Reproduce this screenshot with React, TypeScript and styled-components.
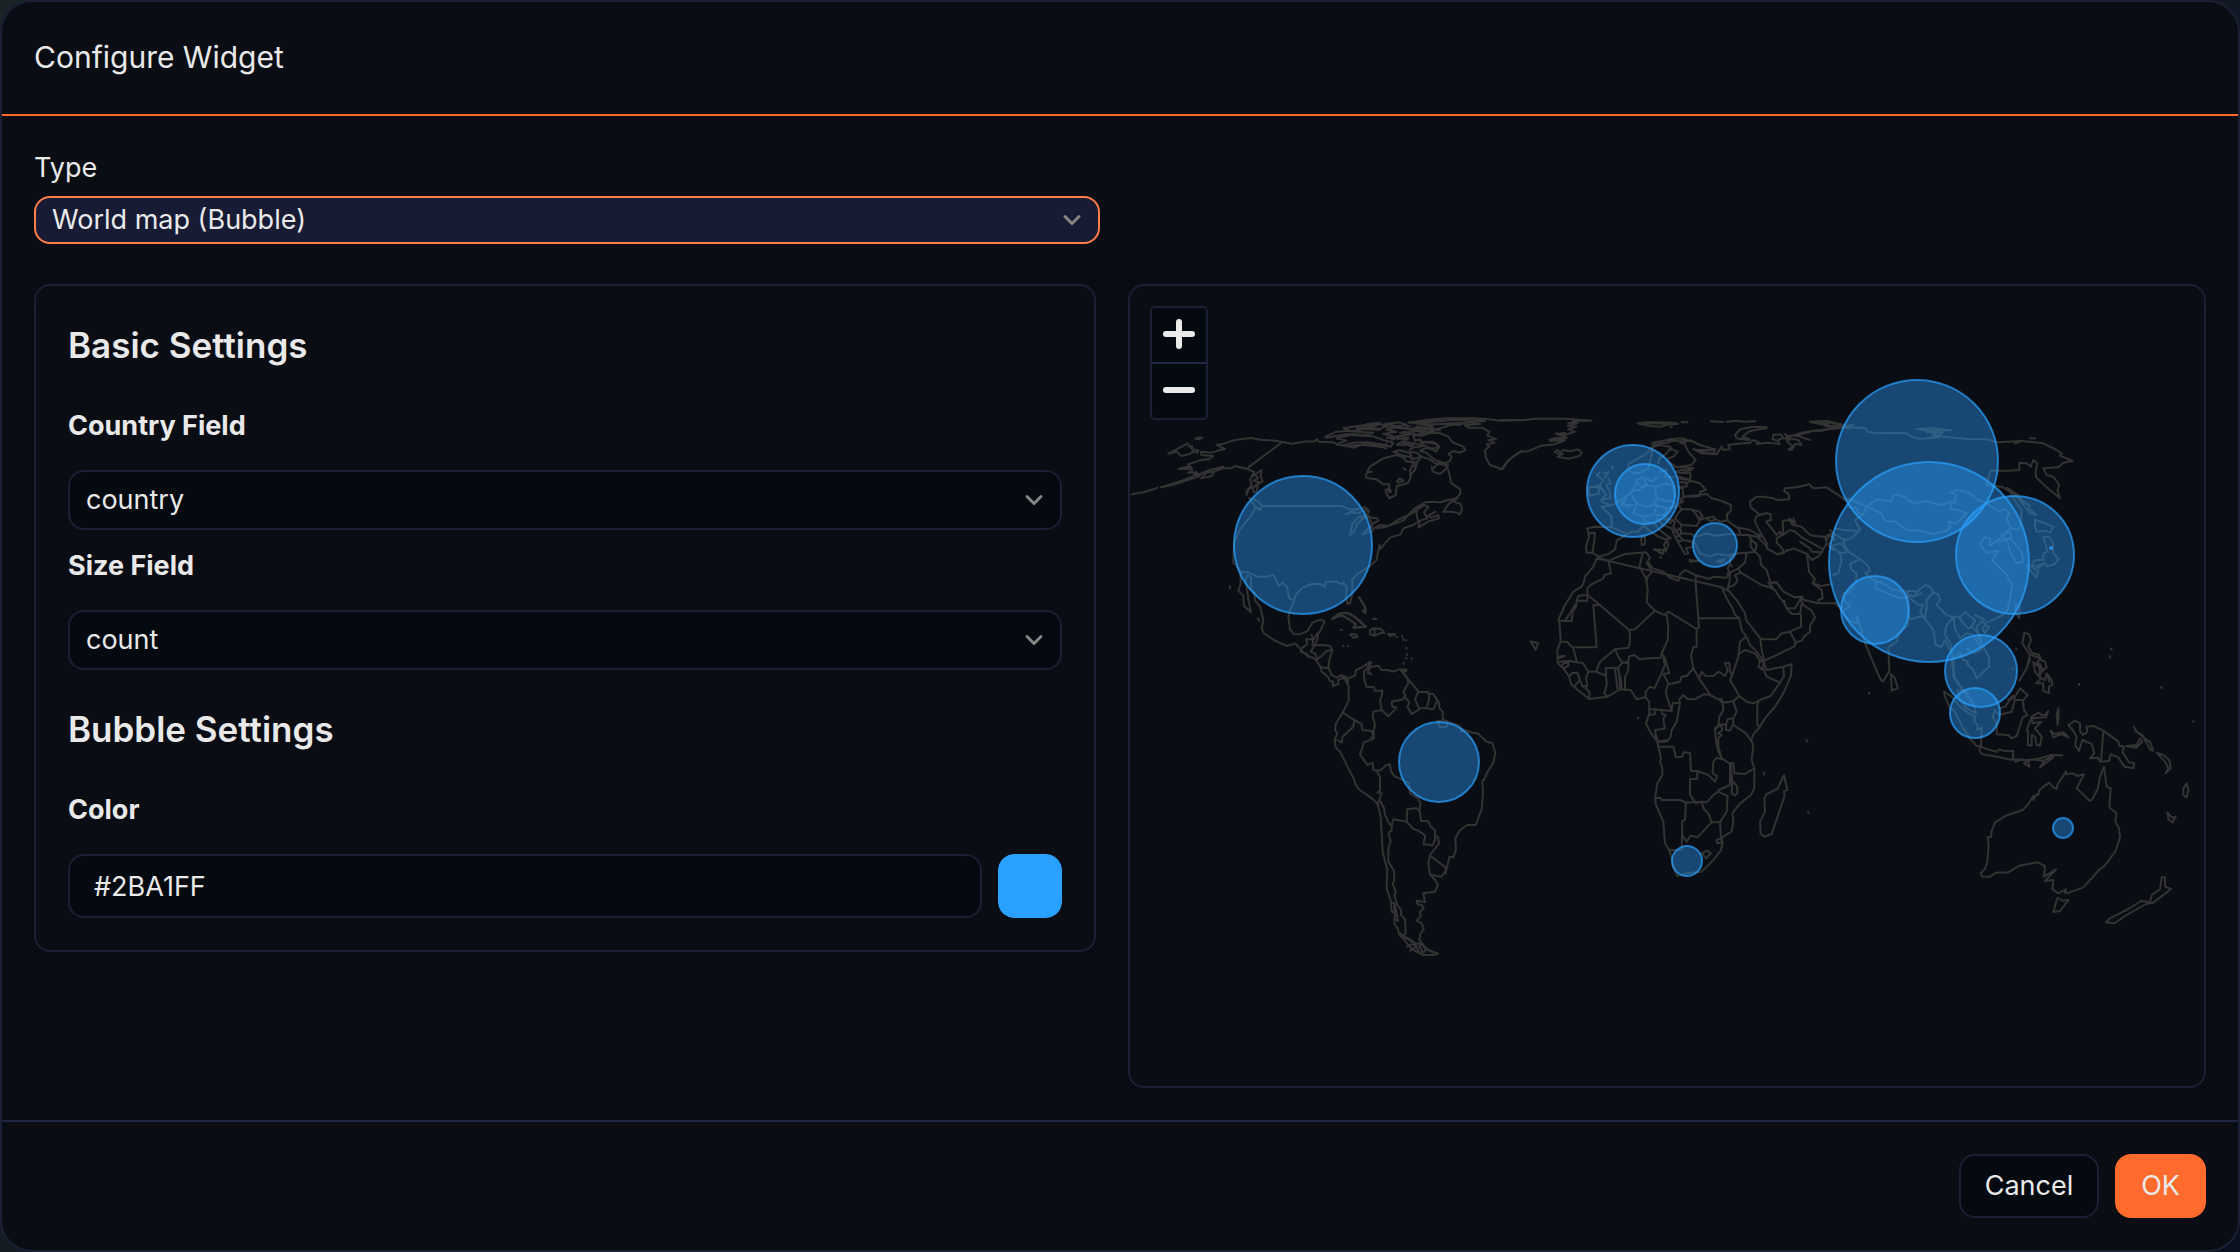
import React, { useId, useState } from "react";
import styled, { createGlobalStyle } from "styled-components";

const color = {
  surface: "#0a0d14",
  field: "#050910",
  line: "#1b2034",
  footerLine: "#1f2645",
  text: "#e9e9e9",
  accent: "#ff6b2c",
  focus: "#ff7d49",
  focusFill: "#171b34",
  icon: "#858585",
  land: "#333333",
};

const GlobalStyle = createGlobalStyle`
  *, *::before, *::after { box-sizing: border-box; }
  body {
    margin: 0;
    color: ${color.text};
    background: linear-gradient(135deg, #1a2326, #0b1020);
    font-family: Inter, "Liberation Sans", sans-serif;
    font-size: 27px;
    line-height: 44px;
  }
  button, input, select { font: inherit; color: inherit; }
`;

const Dialog = styled.main`
  display: flex;
  flex-direction: column;
  min-height: 100vh;
  background: ${color.surface};
  border: 2px solid ${color.line};
  border-radius: 32px;
  overflow: hidden;
`;

const Header = styled.header`
  padding: 32px 32px 34px;
  border-bottom: 2px solid ${color.accent};
`;

const Title = styled.h1`
  margin: 0;
  font-size: 30px;
  line-height: 46px;
  font-weight: 400;
`;

const Body = styled.section`
  flex: 1;
  display: flex;
  flex-direction: column;
  gap: 40px;
  padding: 30px 32px 32px;
`;

const TypeField = styled.div`
  display: flex;
  flex-direction: column;
  gap: 6px;
  width: calc(50% - 20px);
`;

const Columns = styled.div`
  flex: 1;
  display: grid;
  grid-template-columns: minmax(0, 531fr) minmax(0, 539fr);
  gap: 32px;
`;

const Panel = styled.section`
  border: 2px solid ${color.line};
  border-radius: 16px;
  background: ${color.surface};
  box-shadow: 0 4px 12px rgba(0, 0, 0, 0.2);
`;

const Settings = styled(Panel)`
  align-self: start;
  display: flex;
  flex-direction: column;
  gap: 32px;
  padding: 32px;
`;

const Group = styled.div`
  display: flex;
  flex-direction: column;
  gap: 14px;
`;

const GroupTitle = styled.h2`
  margin: 0 0 18px;
  font-size: 35px;
  line-height: 54px;
  font-weight: 600;
`;

const Field = styled.div`
  display: flex;
  flex-direction: column;
  gap: 22px;
`;

const Label = styled.label<{ $strong?: boolean }>`
  font-weight: ${(p) => (p.$strong ? 700 : 400)};
`;

const SelectBox = styled.div`
  position: relative;
`;

const Select = styled.select<{ $active?: boolean }>`
  appearance: none;
  display: block;
  width: 100%;
  height: ${(p) => (p.$active ? 48 : 60)}px;
  padding: 0 56px 0 16px;
  border: 2px solid ${(p) => (p.$active ? color.focus : color.line)};
  border-radius: 16px;
  background: ${(p) => (p.$active ? color.focusFill : color.field)};
  outline: none;
`;

const Arrow = styled.svg`
  position: absolute;
  top: 50%;
  right: 16px;
  width: 24px;
  height: 24px;
  margin-top: -12px;
  fill: none;
  stroke: ${color.icon};
  stroke-width: 3;
  stroke-linecap: round;
  stroke-linejoin: round;
  pointer-events: none;
`;

const ColorRow = styled.div`
  display: flex;
  gap: 16px;
`;

const TextInput = styled.input`
  flex: 1;
  min-width: 0;
  height: 64px;
  padding: 0 24px;
  border: 2px solid ${color.line};
  border-radius: 16px;
  background: ${color.field};
  outline: none;
`;

const Swatch = styled.input`
  appearance: none;
  width: 64px;
  height: 64px;
  padding: 0;
  border: 0;
  border-radius: 16px;
  background: none;
  overflow: hidden;
  cursor: pointer;
  &::-webkit-color-swatch-wrapper { padding: 0; }
  &::-webkit-color-swatch { border: 0; border-radius: 16px; }
`;

const Preview = styled(Panel)`
  position: relative;
  display: flex;
  overflow: hidden;
`;

const MapDrawing = styled.svg`
  flex: 1;
  min-width: 0;
  display: block;
`;

const ZoomBar = styled.div`
  position: absolute;
  top: 20px;
  left: 20px;
  display: flex;
  flex-direction: column;
  border: 2px solid ${color.line};
  border-radius: 5px;
  background: ${color.field};
`;

const ZoomButton = styled.button`
  display: grid;
  place-items: center;
  box-sizing: content-box;
  width: 54px;
  height: 52px;
  padding: 0 0 2px;
  border: 0;
  background: none;
  & + & { border-top: 2px solid #222949; }
  svg {
    width: 36px;
    height: 36px;
    stroke: #ececec;
    stroke-width: 6;
    stroke-linecap: round;
  }
`;

const Footer = styled.footer`
  display: flex;
  justify-content: flex-end;
  gap: 16px;
  padding: 32px;
  border-top: 2px solid ${color.footerLine};
`;

const Button = styled.button<{ $primary?: boolean }>`
  height: 64px;
  padding: 0 24px;
  border: 2px solid ${(p) => (p.$primary ? color.accent : color.line)};
  border-radius: 16px;
  background: ${(p) => (p.$primary ? color.accent : color.field)};
  cursor: pointer;
`;

/* Coastlines and borders, three units to the pixel, each set from its own origin. */
interface Land {
  x: number;
  y: number;
  lines: string[];
}

const lands: Land[] = [
  {
    x: 1120,
    y: 270,
    lines: [
      "M36 673L70 667L100 658L113 653",
      "M123 652L165 643L235 620L243 612L222 613L230 607L205 608L216 602L215 594L203 597L176 596L200 591L213 592L203 583L240 571L268 567L280 558L244 555L243 545L275 548L300 540L315 537L302 531L290 524L305 523L345 510L395 504L420 509L465 512L487 516L515 521L550 515L585 514L590 508L598 515L640 517L655 525L690 527L730 524L780 530L800 522",
      "M487 516L385 592M123 652L185 632L240 612L270 600L310 590L285 605L260 607L243 625L275 618L282 605L312 594L335 595L345 588L385 598L402 606L395 620L425 600L422 618L428 635L414 642L410 665L402 668L395 650L380 662L380 675L386 655L395 645L390 628L404 612L414 625L400 632L418 637L402 652",
      "M145 551L170 538L203 520L208 530L217 528L215 538L235 541L233 548L218 545L210 552L183 558L170 545Z",
      "M226 506L236 502L247 503L238 508Z",
      "M388 685L402 687L420 700L425 710L420 720L405 708Z M425 708L422 720L407 712L395 735L360 778L350 800L342 818L340 880L348 884L362 905",
      "M425 708L665 708L690 718L715 716L735 712L747 722L725 722L718 730L692 728L677 733L700 722L715 718",
      "M735 712L738 738L715 742L697 762L690 795L700 788L712 762L730 745L745 740L752 752L757 765L750 785L727 793L740 780L752 767M745 742L772 745L775 753L757 762M747 722L742 737L757 744",
      "M755 787L762 775L780 765L805 768L833 750L865 735L885 715L915 697L940 695L960 697L985 690L1010 685L1021 670L1021 658L993 638L990 620L984 598L975 585L945 580L930 568L905 560L892 575L885 588L875 590M772 775L800 770L850 752L862 738L880 728L890 720L912 705L925 710L912 727L922 745L900 752L895 772L925 755L957 745L955 735L935 743L925 737L947 725M890 720L890 735L895 755L880 765L850 775L842 793L810 803L795 820L780 838L779 825L772 855L770 870L750 888L715 910L697 928L697 955L695 980L690 1000L682 1002L678 980L680 950L670 937L665 943L650 935L632 935L617 935L615 950L600 942L575 942L545 955L527 975L523 992L510 1020L505 1040L510 1078",
      "M362 905L385 907L412 920L440 920L460 915L470 932L475 948L488 938L500 950L508 985L523 992",
      "M362 905L362 940L355 962L370 977L372 1008L393 1027L385 988L377 925L385 915L393 925L393 955L403 967L405 992L420 1010L430 1050L425 1078",
      "M740 608L750 590L790 565L830 555L850 562L860 575L885 575L870 600L872 622L865 638L845 645L830 648L827 675L808 685L798 668L796 660L808 655L808 643L790 643L770 628L745 625L737 622L740 608L755 605M830 635L840 625L850 632L835 638M870 615L885 600L890 580M806 660h6v6h-6z",
      "M983 592L960 612L938 605L935 590M984 585L960 577L945 590L940 597",
      "M970 725L985 703L1000 692L1010 683L1005 697L1022 702L1026 718L1020 733L1010 728L992 725Z",
      "M880 498L930 484L960 490L985 500L998 517L1030 530L1036 540L1020 548L1000 543L985 552L995 560L990 573L975 580L945 570L918 548L900 543L915 535L945 535L955 528L940 515L905 515L900 508L885 512Z",
      "M900 515L930 518L950 522L958 530L948 545L915 527Z M820 545L840 541L870 550L875 562L850 557L832 550Z M870 545L890 548L905 560L875 568M850 595l8 5M872 575l8 4",
      "M615 500L650 485L690 482L670 475L720 467L760 462L803 465L790 472L775 480L740 476L690 484L725 486L760 488L735 495L680 492L620 503Z",
      "M655 520L680 512L650 505L690 495L760 499L790 510L820 518L812 530L780 522L740 517L700 518L670 526L700 533L740 520L800 535",
      "M740 462L780 458L770 466L735 470L780 477L740 478L710 474L760 470M795 462L840 457L860 465L830 469L805 463L790 470L850 475L870 468",
      "M800 480L830 470L865 478L900 472L890 484L840 488L870 494L825 500L790 492L830 485ZM815 510L840 498L865 505L850 515L880 520L850 526L830 524L860 508L800 503",
      "M865 458L920 450L980 445L1060 445L1100 447L1140 452L1200 450M880 460L950 454L1010 449L1095 453L1050 457L1000 460L950 463L900 463L870 456L940 470L930 482L960 475L990 466L1020 462M890 470L930 475L900 482L870 478L920 490L960 488",
      "M870 490L850 485L905 498L935 486L880 480L910 473L960 480M850 520L875 530L885 520L910 528L882 532L868 540",
      "M1012 466L1045 457L1080 462L1035 466L1045 473L1085 473L1108 485L1102 497L1128 508L1105 510L1123 519L1100 523L1108 530L1095 540L1098 563L1110 585L1145 597L1165 571L1190 552L1204 545",
      "M716 982L735 1010L737 1028L728 1022M637 1045L660 1030L685 1030L705 1042L718 1055L738 1070L700 1073L708 1062L690 1050L665 1036Z M760 1046h8M330 948v6M413 1045l6 8",
    ],
  },
  {
    x: 1300,
    y: 580,
    lines: [
      "M-115 145L-108 160L-75 182L-39 198L-14 190L5 212L25 230L40 233L48 240L62 262L65 275L85 292L90 303L100 305L98 318L115 312L115 300L128 293L138 303L146 320L146 362L128 398L108 430L105 450L112 460L104 480L107 502L120 515L135 545L163 600L166 612L177 628L218 657L233 672L242 710L245 762L248 815L262 870L260 925L272 962L275 995L285 1000L283 1030L293 1045L297 1063L312 1078L325 1095L340 1110L370 1125L400 1125L415 1121L380 1108L368 1092L358 1080L362 1060L371 1047L365 1030L350 1022L362 1010L360 995L371 985L365 975L352 972L350 962L375 966L370 940L405 935L414 915L405 900L390 883L385 850L390 825L417 790L413 770L405 768",
      "M-30 148L-18 163L0 162L22 154L30 140L38 127L62 119L74 124L62 150L55 160L52 178L43 196L70 195L90 198L97 210L88 240L85 262L95 285L110 293L125 285L145 295L165 287L168 270L190 260L212 245L210 262L205 275L214 282L203 280L207 262",
      "M52 160L42 178L18 178L22 192L5 205L2 215L20 222L30 232M35 165L40 178L37 195L43 198M97 210L80 213L62 230L48 240M43 198L32 215L45 220L50 232M62 262L85 265M128 290L145 300L143 310",
      "M212 250L198 268L192 275L193 300L200 320L222 322L225 332L247 332L245 350L240 362L245 390L265 409L290 383L277 380L275 365L310 358L315 345L310 335L325 310L322 295L300 268L278 275L262 270L245 270L235 257L215 260",
      "M303 268L325 298L355 335L345 358L358 388L335 402L322 380L328 368L315 350M355 335L385 336L388 355L380 385L358 385M387 342L400 342L412 362L400 388L380 385M400 342L417 368L418 385L428 395L428 418L445 425L480 438L485 455L495 450L515 458L533 460L560 485L578 490L586 520L580 548L563 575L552 600L547 602L549 640L545 688L527 735L502 735L480 750L466 775L468 808L460 832L448 830L440 868L425 890L393 885",
      "M390 827L437 862L437 882M320 725L322 688L350 684L360 697L363 722L385 724L392 740L405 750L405 780L398 796L370 792L376 768L355 752L340 747Z",
      "M233 672L245 640L232 638L240 632L240 590L230 572L243 570L258 556L270 553L273 575L285 590L300 595L327 610L330 640L355 655L361 670L358 695M320 725L280 718L275 735L268 732L255 705L252 685L240 662",
      "M275 738L275 750L266 760L272 785L265 805L265 845L282 872L283 900L278 910L288 938L283 945L292 975L303 990L304 1007L315 1018L317 1060L310 1068L330 1078L345 1090L368 1092M283 970L290 1000L294 1022L283 1020M300 1060L315 1072L335 1085M275 970L283 968L283 998M322 1100L335 1092L350 1100L330 1112M345 1090L352 1105L358 1120",
      "M128 398L163 420L185 432L187 450L215 453L222 475L190 488L188 500L180 523L202 555L218 548L220 570L230 572M163 420L160 440L128 470L125 488L112 480M245 390L220 395L218 410L225 435L220 455L222 475L213 472",
      "M358 1098L365 1092L378 1110L368 1118Z M370 1100L400 1118M412 422L445 425L440 440L420 442Z",
      "M97 117L110 105L130 98L150 101L175 118L198 140L160 143L168 133L150 120L125 105Z M210 150L222 145L242 147L254 158L240 160L225 167L210 163Z M222 145L225 165M150 163L165 163L173 170L160 173Z M264 162L285 163L270 168Z M178 52L195 82L195 98L188 92L197 90",
      "M310 268h8v6h-8z M220 117h8M122 150h4M129 198h2M143 198h2M306 167v3M310 177v3M317 181h2M319 203v3M321 222v3M319 233v3M335 234v3M311 248v3M288 172h3",
      "M692 184L714 190L707 210Z",
    ],
  },
  {
    x: 1500,
    y: 390,
    lines: [
      "M0 237L8 237L22 215L40 199L65 183L80 185L125 167L165 163L195 150L148 150L165 145L200 143L168 130L195 135L225 125L205 118L230 110L203 108L232 100L218 93L275 92L200 86L110 86L60 91L0 90M150 152L190 153M170 133L195 129M205 100L232 96",
      "M163 187L172 180L182 187L190 180L210 184L235 178L245 188L238 198L205 206L172 200L188 192L170 190",
      "M412 100L450 96L520 98L535 101L500 105L480 110L450 108Z M420 103L470 100L510 102M545 97h18M632 94L670 96M680 95L710 92L735 95L765 94M512 112h3",
      "M455 162L475 155L510 148L545 145L562 150L555 158L545 160L530 150L500 158L480 160L460 168L440 190L410 208L385 222L385 240L400 250L420 248L445 235L450 215L455 190L460 168M458 158L500 150L540 154L575 153M475 220L478 205L500 190L510 175L533 185L520 200L505 205L505 215L530 232L575 225L587 210L565 185L555 165L545 152",
      "M462 170L480 165L510 170L515 180M530 232L580 234L570 242L545 240L528 245M535 248L572 250L570 270L545 262L530 258M540 275L560 280L572 272L600 280L618 300L600 305L600 318L550 320L548 297L535 290M535 265L558 270M540 290L560 290L560 278M548 230L570 238L550 250",
      "M550 320L620 312L635 325L665 333L693 345L692 362L680 375L683 390L662 395L650 390L640 380L615 385L598 390L590 375L575 358L545 358L535 345Z M575 358L598 365L608 378L595 385M620 385L630 395L642 390M545 358L530 375L525 385L545 405L590 408L600 390M540 325L550 335L538 340",
      "M570 150L600 165L645 178L640 192L605 190L585 180L640 180M580 177L605 185M605 185L650 193L665 170L670 180L690 178L685 165L705 162L750 158L760 150L778 158L770 162L805 158L838 162L835 152L818 148L820 135L843 133L850 145L838 148M855 132L870 145L895 150L905 165L885 162L875 180L865 178L880 170L862 155L860 140L885 135L930 150M870 150L855 145M885 135L905 128L940 122L965 122L1010 110L1050 108",
      "M800 112L760 110L720 118L705 135L710 145L745 150M800 114L765 120L745 125L727 140L750 148M930 96L970 94L1000 100L1035 105L990 108Z M940 98L985 102M975 108L1010 110L1060 105",
      "M750 335L770 320L790 320L820 325L830 330L868 328L865 310L852 303L855 295L890 292L928 283L940 295L980 292L1000 305L1030 325L1045 335",
      "M750 335L752 352L780 375L768 380L765 395L780 425L800 458L800 475L833 493L850 490L848 477L830 458L830 445L845 435L840 425L830 435L815 415L798 395L812 390L812 373L800 369L780 375",
      "M850 435L848 392L870 390L875 402L885 395L880 385M870 390L880 405L905 410L930 435L945 438L975 440L990 432M845 437L870 420L885 425L905 442L965 475M868 385L885 400M975 440L980 460L965 487L935 485L930 475L900 455M978 455L990 435L1005 450",
      "M680 390L710 412L750 420L770 432L785 440L770 440L795 462L800 470M715 415L722 435L745 435L770 440M745 435L755 450L770 465L765 485L752 470L752 450L768 460",
      "M765 485L780 500L783 525L800 540L812 580L830 577L850 605L885 622L905 620L912 630L955 640L1010 640L1025 655M833 493L880 475L922 492L922 500L927 545L945 568L938 580L965 600L968 625L955 630L957 640M922 492L935 510L955 500L965 487M938 580L965 588L995 582M850 490L860 480",
      "M722 548L785 585L810 592L825 600L838 622L848 632L860 655L885 655L905 620L905 640L900 672L875 672L860 655M853 632L857 650M783 747L828 748L845 730L870 725L903 710L903 675M903 630L910 645L935 662L945 682L930 708L930 725L910 742L905 752L888 757L882 770L850 785L835 793L793 812L785 780L781 745L760 718L738 690L735 670L710 630L688 605M870 725L887 757M785 585L800 590L818 592L805 578L830 577",
      "M740 488L735 518L715 535L722 548L705 555L713 573L700 587L683 592M765 485L740 488L715 490L690 495L690 520L683 535L690 550L688 575L683 600M683 550L690 548L715 535M690 520L695 530",
      "M590 440L620 430L645 437L690 432L720 435M580 450L590 470L600 490L630 500L650 492L690 497L715 490M650 513L675 508L665 518Z M568 510L595 513L572 515Z",
      "M298 505L325 512L375 492L438 487L450 502L443 515L458 535L490 545L510 563L535 573L540 553L555 540L588 556L628 567L640 560L680 563L688 545M665 592L680 625L700 660L705 675L718 685L725 720L740 742L750 765L765 780L785 805L800 840L850 830L875 823L873 857L850 910L825 950L795 985L777 1015L762 1030L753 1050L760 1065L755 1110L763 1135L763 1195L753 1215L720 1240L697 1270L700 1295L695 1325L665 1342L668 1360L663 1380L640 1410L605 1445L560 1450L532 1458L520 1430L510 1385L495 1360L490 1295L468 1245L465 1225L472 1180L487 1155L487 1135L480 1115L483 1105L472 1055L450 1025L438 1000L448 970L448 935L435 922L410 928L392 900L360 898L322 920L268 927L240 905L213 882L208 860L190 835L173 820L172 780L182 755L178 695L175 690L195 645L220 605L245 590L252 575L255 560L280 530L290 505Z M665 592L690 605",
      "M325 512L333 550L313 555L310 565L275 583L262 595L262 632L230 632L228 650L218 665L215 693L175 692M262 614L235 618L230 632M195 692L210 670L225 645",
      "M262 614L300 645L387 720L405 718L440 685L465 662L443 640L440 635L443 600L438 565L418 530L428 490M440 572L443 560L457 545L440 518M300 645L280 645L290 772L222 772M182 755L200 755L220 775L230 813M175 815L210 813L240 818L248 818L265 845L288 845L312 855L317 855M288 845L300 815L345 778L385 773L390 755L389 720M345 778L355 800L367 817L355 833M317 835L352 833L363 870L365 895M317 835L320 885L313 910L322 920M345 835L352 895M355 833L358 860L360 895M367 817L385 820L385 840L375 860L375 900M372 818L385 815L387 800L403 795L420 808L450 805L482 803L485 790",
      "M265 845L258 865L262 885L257 895L268 905L268 927M208 860L215 850L232 848L240 870L225 887M240 870L248 890L255 888M185 830L190 820L205 818L205 828L190 835M175 800L195 797L178 805M340 780L350 778",
      "M465 662L485 672L500 675L505 710L503 750L485 790L495 805L508 850L490 852L505 880L497 905L510 950L515 960M495 672L505 665L590 717M588 556L587 580L595 685L597 712L590 717L590 770L580 770L573 797L580 835L597 865L630 913M597 685L718 685M505 883L540 875L545 860L560 858L580 835M490 805L495 825L480 860L463 895L450 890L437 905L437 922",
      "M515 960L518 940L540 938L538 928L550 915L563 928L585 928L612 912L630 915L655 928L668 938L700 934L717 918L705 895L690 870L697 855L715 800L720 755L738 740M597 865L605 845L615 857L640 858L655 845L675 858L683 840L675 820L688 818L690 845L697 855M655 928L665 928L668 938",
      "M715 793L735 780L765 790L780 812L775 830L785 838L793 820L785 812M790 838L800 860L840 878L812 918L780 930L760 940L740 935L717 918M850 832L852 858L840 878M778 930L772 945L772 1005L778 1010M700 934L710 965L700 985L700 1005L738 1030L755 1055",
      "M668 938L670 960L658 980L655 1005L678 1003L683 988L700 985M678 1003L678 1020L690 1022L700 1000M648 1015L663 1005L667 1020L655 1030L665 1035L655 1045M540 938L530 995L515 1020L512 1040L500 1055L475 1055M475 1070L520 1070L528 1102L547 1100L550 1087L570 1088L573 1143L592 1143L592 1167L570 1167L570 1215L588 1240M592 1143L625 1155L645 1175L652 1158L638 1150L640 1115L650 1103L668 1108L655 1085L648 1050L645 1015L655 1005M655 1045L655 1070L665 1105L688 1120L700 1120L703 1150L735 1152L763 1135M690 1120L690 1185L655 1200L655 1205L683 1218L680 1265L660 1297L635 1297L625 1270L612 1258L605 1237",
      "M692 1122L697 1180L695 1210L705 1217L712 1210L712 1190L700 1175M655 1205L640 1215L620 1237L605 1235L588 1240M448 958L487 960L515 963M448 975L465 973L465 958M483 960L487 972L497 975L490 988L495 1015L480 1018L465 1020L468 1038L475 1055L500 1050M465 1225L480 1223L487 1230L540 1230L558 1238L605 1235M558 1238L555 1290L547 1293L545 1380L510 1380M547 1335L560 1355L572 1337L592 1342L635 1297M660 1297L663 1345M605 1390L622 1382L633 1390L618 1405Z M650 1350L663 1345L665 1358L652 1360Z",
      "M852 1155L862 1200L853 1203L853 1220L815 1332L793 1340L782 1332L780 1295L795 1265L793 1225L800 1212L832 1197Z M792 1147v6M918 1050l4 5M925 1266v4M414 983v3",
      "M262 415L285 410L335 412M262 415L267 440L258 470L260 488L275 488L298 500L325 492L345 478L350 452L370 440L395 425L415 425M265 430L285 428L282 460L277 488M298 500L290 510M335 412L335 380L315 360L305 350L340 345L360 330L385 315L400 300L410 270M335 412L355 420L375 430",
      "M430 405L445 420L475 440L500 450L492 465L497 485L505 465L500 448L512 445L485 425L470 410L462 398L440 395M462 478L490 480L488 492Z M423 443L435 440L435 463L425 465Z M482 500v4M430 405L415 425",
      "M470 385L490 405L515 415L525 440L545 475L555 493L565 490L558 475L580 470L575 455L550 450L540 440L530 425L520 410L525 395L500 385M525 425L540 415L545 430L575 432L583 440M530 440L545 430M545 405L540 418M520 390L510 400L495 388M525 440L535 455L550 450",
      "M325 265L332 280L318 285L330 305L332 325L302 330L318 315L308 300L300 285L310 270L290 255L300 247M335 230l4 6M265 300L270 290L295 292L298 310L268 318Z M310 250L325 247L315 262M305 335L330 345M285 290L300 285L298 300",
      "M410 270L430 262L440 285L425 292L415 285Z M385 315L405 300L425 300L435 285L465 290L470 325L460 345L435 350L410 340L398 320M465 290L500 280L525 290M470 325L490 330L520 335L530 350L500 355L465 345M410 340L400 370L430 380L460 375L470 350M430 380L435 395M360 330L380 345L400 345M500 355L495 375L470 375M380 320L365 345L385 350M440 265L455 275L470 262M520 300L525 320M480 245L500 240L495 260L520 262",
    ],
  },
  {
    x: 1780,
    y: 360,
    lines: [
      "M90 185L140 183L190 195L160 200L120 190Z M45 228L100 212L190 203L255 203L262 215L290 220L375 218L395 230L420 237L475 232L460 227L560 237L620 238L650 247L725 243L705 250L720 242L790 250L830 270L845 280L840 287L878 303L850 308L835 322L790 325L800 345L820 350L838 375L832 390L840 415L800 382L768 352L767 335L772 310L760 300L752 320L740 310L718 308L718 330L680 332L632 332L618 375L665 380L690 395L710 430L725 450L723 490L715 510L690 505",
      "M410 207L450 205L515 211L450 213Z M440 217L490 215L480 225L455 220M750 235h15",
      "M680 383L715 405L730 425L750 437L745 445L770 465L750 460L720 420L700 400Z",
      "M190 417L205 415L260 440L290 418L335 425L340 403L375 410L380 420L410 430L435 422L480 435L515 425L525 430L528 405L510 398L530 390L560 395L595 420L620 430L655 453L675 447L688 460L680 475L690 500",
      "M260 440L305 460L315 483L345 485L380 510L420 512L460 522L500 512L512 500L505 485L530 490L560 460L535 450L510 447L515 425M205 440L230 445L235 460L250 463L258 443M250 463L225 480L240 510L220 530L190 545L205 575M165 505L190 510L230 512M140 530L160 520L185 535L200 540M150 560L180 550L205 575L180 580L155 560M150 510L165 525L145 555L160 570",
      "M205 575L240 597L262 615L270 632L255 640L290 665M180 580L185 600L175 640L160 645M240 597L210 612L215 630L230 640L228 665L210 695L190 700L190 715L210 740L190 752",
      "M290 665L300 665L340 690L385 695L375 715L345 710L288 685Z M385 692L412 695L405 708L385 705Z M380 700L385 770M385 710L415 735L430 735L420 755L430 770M400 710L425 700",
      "M412 695L435 675L450 680L460 697L440 720L440 745L435 775M460 697L475 703L480 720L470 735L485 750L498 765L515 770M430 770L460 810L467 855L485 860L495 840L515 880L520 950L545 985M385 770L395 778L415 770L430 770",
      "M165 727L185 750L205 780L230 790L232 770L255 850L300 955L308 965L328 935L325 862L350 845L355 820L385 795L385 770M333 943L345 955L353 985L335 992Z",
      "M690 505L665 530L630 558L630 535L612 532L600 555L620 578L655 573L637 600L685 650L685 660L697 670L690 720L680 755L660 770L615 790L605 785L590 800L595 830L615 870L628 895L627 920L590 955L580 930L560 910",
      "M665 525L690 515L695 540L725 575L730 605L710 610L690 575L682 545ZM655 545L690 535",
      "M765 478L820 500L810 518L795 512L770 515L765 500Z M790 530L805 530L818 545L820 580L835 597L825 612L800 620L795 608L770 620L755 615L765 600L790 600L790 580L803 575Z M740 617L755 620L775 635L768 652L755 635Z M775 615L790 612L775 625Z",
      "M708 732L718 735L718 775L705 755Z M615 795L627 800L615 820L608 808Z M520 770L540 770L555 757L585 780M520 770L525 805L540 835L560 820L580 825L605 870L580 880L560 865M535 770L550 790L565 805L575 800M585 780L575 800L600 825L605 850M585 765L615 780M520 770L498 800L495 825L512 850L520 895L540 880L550 900L565 905",
      "M520 895L523 950L545 985L565 1000M267 998v4M994 866v2M989 889v3M897 972v3M1144 981v2M708 867h2M698 927h2",
    ],
  },
  {
    x: 1880,
    y: 600,
    lines: [
      "M433 98L447 103L453 120L445 140L455 158L478 165L483 180L495 185L500 203L487 212L470 190L480 175L455 165M433 98L427 130L440 150L450 165L440 205L418 242L437 210L450 180M460 185L465 215L480 233L478 200L462 190M478 190L490 210L482 220M468 250L485 235L495 240L500 220L515 240L517 255L507 260L507 280L490 272L490 250Z M500 220L508 245",
      "M360 325L375 320L390 300L405 290L420 265L443 285L428 303L432 330L442 345L428 352L410 408L395 415L385 405L350 403L350 370L338 350L345 330L357 345L395 335L405 300L428 300M385 300L400 287L405 300",
      "M455 350L475 338L485 345L495 345L505 333L498 352L455 355L458 370L485 365L465 385L485 410L480 437L470 435L465 410L455 405L455 437L443 435L445 395L440 390Z M535 325L530 345L533 375L536 350Z M512 392L520 412L545 402L565 412L550 397L524 402Z",
      "M192 275L215 290L235 315L265 340L285 350L283 365L293 375L292 390L305 382L303 438L290 438L270 415L250 385L222 330L210 325L195 290Z M232 270L240 300L260 325L288 340L280 310L260 285L240 270",
      "M300 440L330 450L350 455L358 448L370 452L400 453L398 480L350 470L305 462L298 450Z M400 478L430 480L450 480L480 475L515 465L547 466M405 485L430 478M432 490L448 500L445 482Z M480 502L495 480L520 472Z M450 478L490 482L520 468",
      "M565 375L585 362L600 370L600 395L610 405L622 395L620 380L640 378L670 392L715 425L718 437L733 440L727 455L747 487L763 490L760 505L733 500L715 472L692 463L687 483L660 485L655 473L630 475L643 460L635 432L607 420L597 453L585 435L590 410L578 390Z M670 392L663 485",
      "M740 438L770 435L780 415L787 425L768 443Z M762 380L768 395L785 403L795 417L810 425L820 452L812 450L790 412L768 392Z M830 458L850 465L868 480L872 505L857 520L865 505L855 485Z M920 550L925 570L920 592L910 585L910 565Z M862 637L875 652L887 650L877 668L865 657Z",
      "M558 515L558 523L578 520L593 528L612 523L590 565L630 603L637 598L653 567L660 530L672 500L680 560L692 565L688 622L709 640L706 665L717 685L720 712L707 753L672 800L660 807L610 862L567 878L555 878L558 868L535 880L517 867L520 840L495 843L528 808L492 830L495 798L473 787L418 797L385 817L348 818L330 830L307 830L302 820L315 807L322 785L326 735L323 712L333 712L335 693L345 668L375 648L428 630L445 612L460 588L460 600L468 583L475 585L478 570L507 548L520 562L530 567L532 555Z",
      "M532 893L547 902L566 900L540 933L520 936Z M845 832L855 832L855 860L873 867L820 908L798 912L740 945L703 970L678 967L690 955L745 927L783 903L810 907L815 885L840 868Z M694 146v3M690 169v4M597 252v3M844 261v2M940 364v2",
    ],
  },
];

const bubbles = [
  { country: "Russia", x: 1917, y: 461, r: 81 },
  { country: "China", x: 1929, y: 562, r: 100 },
  { country: "Japan", x: 2015, y: 555, r: 59 },
  { country: "Tokyo", x: 2051, y: 548, r: 1 },
  { country: "India", x: 1875, y: 610, r: 34 },
  { country: "United States", x: 1303, y: 545, r: 69 },
  { country: "Brazil", x: 1439, y: 762, r: 40 },
  { country: "United Kingdom", x: 1633, y: 491, r: 46 },
  { country: "Germany", x: 1645, y: 494, r: 30 },
  { country: "Turkey", x: 1715, y: 545, r: 22 },
  { country: "South Africa", x: 1687, y: 861, r: 15 },
  { country: "Thailand", x: 1981, y: 671, r: 36 },
  { country: "Malaysia", x: 1975, y: 713, r: 25 },
  { country: "Australia", x: 2063, y: 828, r: 10 },
];

function Dropdown({
  label,
  options,
  active,
}: {
  label: string;
  options: string[];
  active?: boolean;
}) {
  const id = useId();
  const Wrapper = active ? TypeField : Field;
  return (
    <Wrapper>
      <Label htmlFor={id} $strong={!active}>
        {label}
      </Label>
      <SelectBox>
        <Select id={id} $active={active}>
          {options.map((option) => (
            <option key={option}>{option}</option>
          ))}
        </Select>
        <Arrow viewBox="0 0 24 24" aria-hidden="true">
          <path d="M5 8.5l7 7 7-7" />
        </Arrow>
      </SelectBox>
    </Wrapper>
  );
}

function BubbleMap({ fill }: { fill: string }) {
  return (
    <MapDrawing viewBox="1130 286 1074 800" aria-hidden="true">
      <g fill="none" stroke={color.land} strokeWidth="6" strokeLinejoin="round" strokeLinecap="round">
        {lands.map((land) => (
          <g key={`${land.x}-${land.y}`} transform={`translate(${land.x} ${land.y}) scale(0.33333)`}>
            {land.lines.map((d) => (
              <path key={d} d={d} />
            ))}
          </g>
        ))}
      </g>
      <g fill={fill} fillOpacity="0.4" stroke={fill} strokeOpacity="0.7" strokeWidth="2">
        {bubbles.map((b) => (
          <circle key={b.country} cx={b.x} cy={b.y} r={b.r} />
        ))}
      </g>
    </MapDrawing>
  );
}

export default function App() {
  const [bubbleColor, setBubbleColor] = useState("#2BA1FF");
  const colorId = useId();
  return (
    <>
      <GlobalStyle />
      <Dialog>
        <Header>
          <Title>Configure Widget</Title>
        </Header>
        <Body>
          <Dropdown label="Type" options={["World map (Bubble)"]} active />
          <Columns>
            <Settings>
              <Group>
                <GroupTitle>Basic Settings</GroupTitle>
                <Dropdown label="Country Field" options={["country", "count"]} />
                <Dropdown label="Size Field" options={["count", "country"]} />
              </Group>
              <Group>
                <GroupTitle>Bubble Settings</GroupTitle>
                <Field>
                  <Label htmlFor={colorId} $strong>
                    Color
                  </Label>
                  <ColorRow>
                    <TextInput
                      id={colorId}
                      type="text"
                      value={bubbleColor}
                      onChange={(e) => setBubbleColor(e.target.value)}
                    />
                    <Swatch
                      type="color"
                      aria-label="Pick color"
                      value={bubbleColor.toLowerCase()}
                      onChange={(e) => setBubbleColor(e.target.value.toUpperCase())}
                    />
                  </ColorRow>
                </Field>
              </Group>
            </Settings>
            <Preview>
              <BubbleMap fill={bubbleColor} />
              <ZoomBar>
                <ZoomButton type="button" aria-label="Zoom in">
                  <svg viewBox="0 0 36 36" aria-hidden="true">
                    <path d="M5 18h26M18 6v24" />
                  </svg>
                </ZoomButton>
                <ZoomButton type="button" aria-label="Zoom out">
                  <svg viewBox="0 0 36 36" aria-hidden="true">
                    <path d="M5 18h26" />
                  </svg>
                </ZoomButton>
              </ZoomBar>
            </Preview>
          </Columns>
        </Body>
        <Footer>
          <Button type="button">Cancel</Button>
          <Button type="button" $primary>
            OK
          </Button>
        </Footer>
      </Dialog>
    </>
  );
}
